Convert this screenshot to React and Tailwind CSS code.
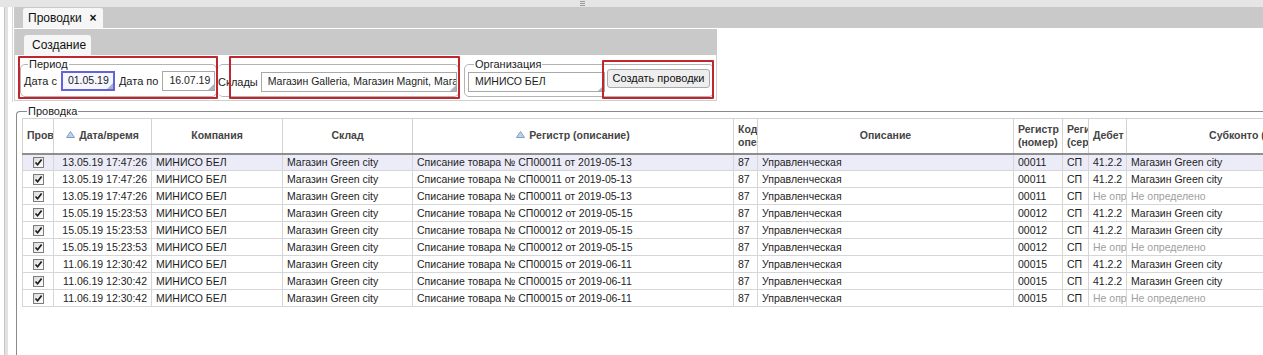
import React from "react";

const rows = [
  { d: "13.05.19 17:47:26", r: "Списание товара № СП00011 от 2019-05-13", n: "00011", ok: true },
  { d: "13.05.19 17:47:26", r: "Списание товара № СП00011 от 2019-05-13", n: "00011", ok: true },
  { d: "13.05.19 17:47:26", r: "Списание товара № СП00011 от 2019-05-13", n: "00011", ok: false },
  { d: "15.05.19 15:23:53", r: "Списание товара № СП00012 от 2019-05-15", n: "00012", ok: true },
  { d: "15.05.19 15:23:53", r: "Списание товара № СП00012 от 2019-05-15", n: "00012", ok: true },
  { d: "15.05.19 15:23:53", r: "Списание товара № СП00012 от 2019-05-15", n: "00012", ok: false },
  { d: "11.06.19 12:30:42", r: "Списание товара № СП00015 от 2019-06-11", n: "00015", ok: true },
  { d: "11.06.19 12:30:42", r: "Списание товара № СП00015 от 2019-06-11", n: "00015", ok: true },
  { d: "11.06.19 12:30:42", r: "Списание товара № СП00015 от 2019-06-11", n: "00015", ok: false },
];

function Corner() {
  return (
    <svg className="absolute right-0 bottom-0" width="6" height="6" viewBox="0 0 6 6">
      <polygon points="6,0 6,6 0,6" fill="#aab4c4" />
    </svg>
  );
}

function Input({ children, w, active }) {
  return (
    <div
      className={
        "relative h-[20px] flex items-center overflow-hidden whitespace-nowrap text-[10.5px] " +
        w +
        (active ? " border-2 border-[#6464d8] bg-[#f6f6ff] pl-[5px]" : " border border-[#a8a8a8] bg-white pl-[6px]")
      }
    >
      {children}
      <Corner />
    </div>
  );
}

function SortArrow() {
  return (
    <svg width="9" height="7" viewBox="0 0 9 7" className="inline-block mr-[4px] -mt-[3px] align-middle">
      <polygon points="0.5,6.5 4.5,0.5 8.5,6.5" fill="#bcd2ec" stroke="#7f9fc4" strokeWidth="1" />
    </svg>
  );
}

function Check() {
  return (
    <span className="inline-flex w-[11px] h-[11px] border border-[#7c7c7c] bg-gradient-to-br from-[#dadada] to-white items-center justify-center align-middle">
      <svg width="9" height="9" viewBox="0 0 9 9">
        <path d="M1.5 4.5 L3.6 6.8 L7.6 1.6" fill="none" stroke="#1b1b1b" strokeWidth="1.7" />
      </svg>
    </span>
  );
}

export default function App() {
  const th =
    "border border-[#d2d2d2] border-b-2 border-b-[#8e8e8e] font-bold text-[#454545] h-[35px] p-0 px-[4px] overflow-hidden whitespace-nowrap leading-[13px]";
  const td = "border border-[#d6d6d6] h-[17px] p-0 px-[4px] overflow-hidden whitespace-nowrap leading-[15px]";
  return (
    <div className="w-[1263px] h-[355px] bg-white overflow-hidden font-['Liberation_Sans',Arial,sans-serif] text-[11px] text-[#1c1c1c] flex flex-col">
      {/* top strip */}
      <div className="h-[7px] bg-[#e5e5e5] shrink-0 flex">
        <div className="ml-[580px] mt-[1px] flex flex-col gap-[1px]">
          <div className="w-[5px] h-[1px] bg-[#9a9a9a]" />
          <div className="w-[5px] h-[1px] bg-[#9a9a9a]" />
          <div className="w-[5px] h-[1px] bg-[#9a9a9a]" />
        </div>
      </div>

      <div className="flex flex-1 min-h-0">
        {/* left gutter */}
        <div className="w-[14px] shrink-0 flex">
          <div className="ml-[4px] w-[4px] bg-[#e2e2e2] border-l border-[#c6c6c6]" />
          <div className="ml-[4px] w-[1px] bg-[#d8d8d8] h-[95px]" />
        </div>

        {/* main column */}
        <div className="flex-1 min-w-0 flex flex-col">
          {/* tab bar */}
          <div className="h-[21px] bg-[#c9c9c9] flex items-end shrink-0">
            <div className="ml-[9px] w-[80px] h-[20px] bg-[#f6f6f6] rounded-t-[2px] flex items-center pl-[5px] text-[12px] text-[#111]">
              Проводки
              <span className="ml-[8px] font-bold text-[12px] leading-none">×</span>
            </div>
          </div>
          <div className="h-[1px] bg-white shrink-0" />

          {/* inner panel */}
          <div className="w-[703px] shrink-0 border-l border-[#cfcfcf]">
            <div className="h-[26px] bg-[#c9c9c9] flex items-end">
              <div className="ml-[9px] w-[67px] h-[20px] bg-[#f6f6f6] rounded-t-[3px] flex items-center pl-[8px] text-[12px] text-[#111]">
                Создание
              </div>
            </div>

            <div className="relative h-[46px] bg-white border-r border-b border-[#cfcfcf] flex items-start">
              {/* Период */}
              <fieldset className="ml-[5px] mt-[3px] w-[197px] h-[39px] border border-[#b4b4b4] rounded-[5px] pl-[3px]">
                <legend className="ml-[4px] px-[1px] leading-[12px] text-[11px]">Период</legend>
                <div className="flex items-center gap-[4px] mt-[1px]">
                  <span>Дата с</span>
                  <Input w="w-[54px]" active>
                    01.05.19
                  </Input>
                  <span>Дата по</span>
                  <Input w="w-[53px]">16.07.19</Input>
                </div>
              </fieldset>

              {/* Склады */}
              <fieldset className="ml-[1px] mt-[3px] w-[241px] h-[39px] border border-[#b4b4b4] border-l-0 rounded-[5px]">
                <legend className="ml-[4px] leading-[12px] text-[11px] w-0 p-0 invisible">.</legend>
                <div className="flex items-center gap-[3px] mt-[2px]">
                  <span>Склады</span>
                  <Input w="w-[196px]">Магазин Galleria, Магазин Magnit, Магазин Green city</Input>
                </div>
              </fieldset>

              {/* Организация */}
              <fieldset className="ml-[5px] mt-[3px] w-[250px] h-[39px] border border-[#b4b4b4] rounded-[5px] pl-[3px]">
                <legend className="ml-[6px] px-[1px] leading-[12px] text-[11px]">Организация</legend>
                <div className="flex items-start gap-[2px]">
                  <div className="mt-[2px]">
                    <Input w="w-[137px]">МИНИСО БЕЛ</Input>
                  </div>
                  <button className="-mt-[1px] w-[103px] h-[19px] bg-[#eeeeee] border border-[#ababab] rounded-[3px] text-[11px] text-[#111] flex items-center justify-center">
                    Создать проводки
                  </button>
                </div>
              </fieldset>

              {/* annotation boxes */}
              <div className="absolute left-[3px] top-[1px] w-[200px] h-[43px] border-2 border-[#c02630] rounded-[1px] pointer-events-none" />
              <div className="absolute left-[214px] top-[1px] w-[231px] h-[43px] border-2 border-[#c02630] rounded-[1px] pointer-events-none" />
              <div className="absolute left-[587px] top-[5px] w-[112px] h-[39px] border-2 border-[#c02630] rounded-[1px] pointer-events-none" />
            </div>
          </div>

          {/* Проводка fieldset */}
          <fieldset className="ml-[2px] mt-[4px] w-[1400px] h-[300px] border-t border-l border-[#8a8a8a] rounded-tl-[4px] pl-[5px] shrink-0">
            <legend className="ml-[5px] px-[1px] leading-[12px] text-[11px]">Проводка</legend>
            <table className="mt-[1px] table-fixed border-collapse w-[1358px] text-[10.5px] text-[#1c1c1c]">
              <colgroup>
                <col className="w-[31px]" />
                <col className="w-[98px]" />
                <col className="w-[131px]" />
                <col className="w-[130px]" />
                <col className="w-[321px]" />
                <col className="w-[24px]" />
                <col className="w-[256px]" />
                <col className="w-[49px]" />
                <col className="w-[26px]" />
                <col className="w-[38px]" />
                <col className="w-[254px]" />
              </colgroup>
              <thead>
                <tr>
                  <th className={th + " text-left"}>Пров</th>
                  <th className={th + " text-center"}>
                    <SortArrow />
                    Дата/время
                  </th>
                  <th className={th + " text-center"}>Компания</th>
                  <th className={th + " text-center"}>Склад</th>
                  <th className={th + " text-center"}>
                    <SortArrow />
                    Регистр (описание)
                  </th>
                  <th className={th + " text-left"}>
                    Код
                    <br />
                    операции
                  </th>
                  <th className={th + " text-center"}>Описание</th>
                  <th className={th + " text-left"}>
                    Регистр
                    <br />
                    (номер)
                  </th>
                  <th className={th + " text-left"}>
                    Регистр
                    <br />
                    (серия)
                  </th>
                  <th className={th + " text-left"}>Дебет</th>
                  <th className={th + " text-center"}>Субконто (дебет)</th>
                </tr>
              </thead>
              <tbody>
                {rows.map((r, i) => (
                  <tr key={i} className={i === 0 ? "bg-[#ececf8]" : "bg-white"}>
                    <td className={td + " text-center"}>
                      <Check />
                    </td>
                    <td className={td + " text-right"}>{r.d}</td>
                    <td className={td}>МИНИСО БЕЛ</td>
                    <td className={td}>Магазин Green city</td>
                    <td className={td}>{r.r}</td>
                    <td className={td}>87</td>
                    <td className={td}>Управленческая</td>
                    <td className={td}>{r.n}</td>
                    <td className={td}>СП</td>
                    {r.ok ? (
                      <td className={td}>41.2.2</td>
                    ) : (
                      <td className={td + " text-[#a0a0a0]"}>Не определено</td>
                    )}
                    {r.ok ? (
                      <td className={td}>Магазин Green city</td>
                    ) : (
                      <td className={td + " text-[#a0a0a0]"}>Не определено</td>
                    )}
                  </tr>
                ))}
              </tbody>
            </table>
          </fieldset>
        </div>
      </div>
    </div>
  );
}
